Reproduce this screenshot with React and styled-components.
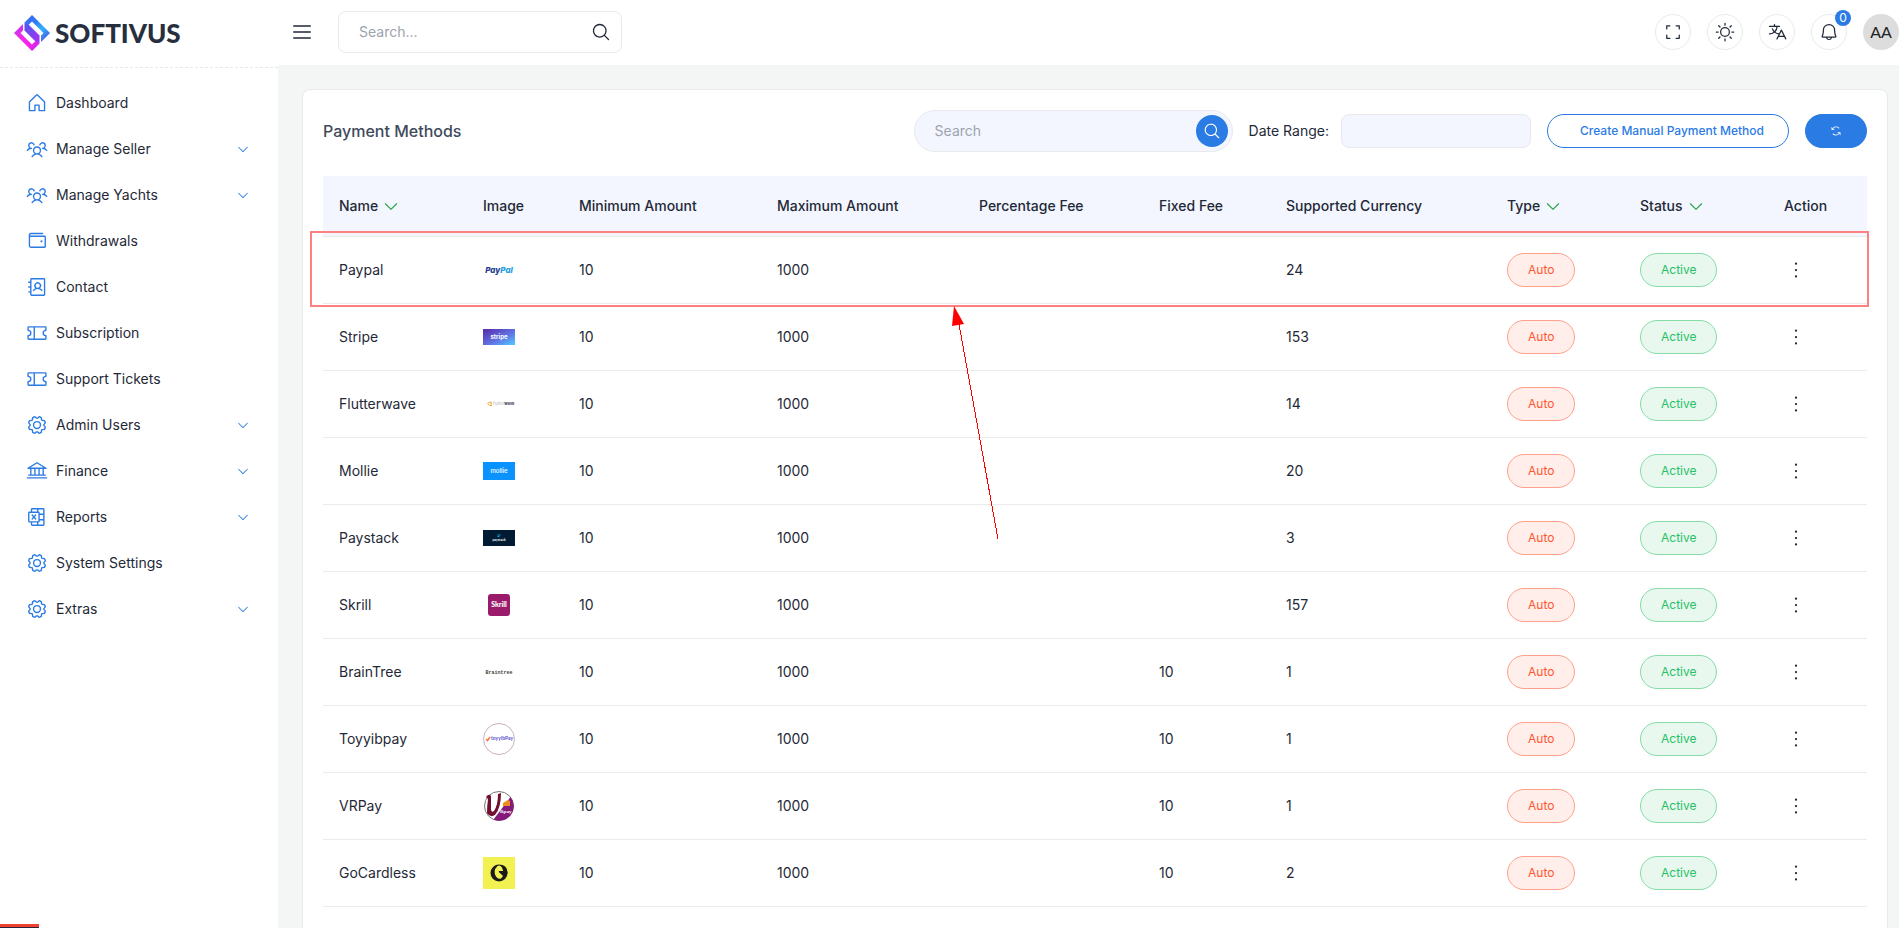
import React from "react"
import styled, { createGlobalStyle } from "styled-components"
import {
  PiHouse, PiUsersThree, PiWallet, PiAddressBook, PiTicket, PiGear, PiBank,
  PiMicrosoftExcelLogo, PiList, PiMagnifyingGlass, PiCornersOut, PiSun, PiTranslate,
  PiBell, PiArrowsCounterClockwise, PiCaretDown, PiDotsThreeVertical,
} from "react-icons/pi"

const GlobalStyle = createGlobalStyle`
  * {
    box-sizing: border-box;
  }

  body {
    margin: 0;
    background: #f4f6f6;
    color: #1f2937;
    font-family: Inter, "Liberation Sans", sans-serif;
    font-size: 14px;
    line-height: 20px;
  }

  button, input {
    font: inherit;
    color: inherit;
  }

  button {
    cursor: pointer;
  }
`

const Layout = styled.div`
  display: flex;
  height: 100vh;
  overflow: hidden;
`

const Sidebar = styled.aside`
  width: 278px;
  flex-shrink: 0;
  background: #fff;
`

const Brand = styled.a`
  display: flex;
  align-items: center;
  gap: 5px;
  height: 68px;
  padding: 0 14px 2px;
  border-bottom: 1px dashed #e5e7eb;
  color: #272f3e;
  font-family: Lato, sans-serif;
  font-size: 26px;
  font-weight: 900;
  text-decoration: none;
`

const Menu = styled.ul`
  display: flex;
  flex-direction: column;
  gap: 6px;
  margin: 0;
  padding: 15px 28px 15px 26px;
  list-style: none;
`

const MenuLink = styled.a`
  display: flex;
  align-items: center;
  gap: 8px;
  height: 40px;
  color: inherit;
  text-decoration: none;

  svg {
    color: #2b7be4;
  }

  span {
    flex: 1;
  }
`

const Page = styled.div`
  flex: 1;
  min-width: 0;
  display: flex;
  flex-direction: column;
`

const Header = styled.header`
  display: flex;
  align-items: center;
  justify-content: space-between;
  height: 65px;
  flex-shrink: 0;
  padding: 0 0 1px 12px;
  background: #fff;
`

const HeaderGroup = styled.div`
  display: flex;
  align-items: center;
  gap: ${({ $gap }) => $gap}px;
`

const PlainButton = styled.button`
  display: flex;
  padding: 0;
  border: 0;
  background: none;
`

const TopSearch = styled.form`
  display: flex;
  align-items: center;
  width: 284px;
  height: 42px;
  padding: 0 10px 0 20px;
  border: 1px solid #e8eaec;
  border-radius: 8px;
`

const SearchInput = styled.input`
  flex: 1;
  min-width: 0;
  padding: 0;
  border: 0;
  outline: 0;
  background: none;

  &::placeholder {
    color: #9ca3af;
    opacity: 1;
  }
`

const RoundButton = styled.button`
  position: relative;
  display: flex;
  align-items: center;
  justify-content: center;
  width: 36px;
  height: 36px;
  padding: 0;
  border: 1px solid #e8eaec;
  border-radius: 50%;
  background: #fff;
`

const Counter = styled.span`
  position: absolute;
  top: -5px;
  right: -5px;
  width: 16px;
  height: 16px;
  border-radius: 50%;
  background: #2b7be4;
  color: #fff;
  font-size: 12px;
  line-height: 16px;
`

const Avatar = styled.button`
  width: 36px;
  height: 36px;
  padding: 0;
  border: 0;
  border-radius: 50%;
  background: #ddd;
  color: #222;
  font-family: Lato, sans-serif;
  font-size: 16px;
`

const Main = styled.main`
  flex: 1;
  min-height: 0;
  overflow-y: auto;
  scrollbar-width: none;
  padding: 24px 11px 24px 24px;
`

const Card = styled.section`
  padding: 20px 20px 60px;
  border: 1px solid #e8ebeb;
  border-radius: 8px;
  background: #fff;
`

const Toolbar = styled.div`
  display: flex;
  align-items: center;
  gap: 16px;
  margin-bottom: 24px;
`

const Title = styled.h1`
  flex: 1;
  margin: 0;
  color: #404a5a;
  font-size: 16px;
  font-weight: 500;
`

const TableSearch = styled.form`
  display: flex;
  align-items: center;
  width: 319px;
  height: 42px;
  padding: 0 4px 0 20px;
  border: 1px solid #e8eaec;
  border-radius: 21px;
  background: #f3f6fe;
`

const SearchButton = styled.button`
  display: flex;
  align-items: center;
  justify-content: center;
  width: 32px;
  height: 32px;
  padding: 0;
  border: 0;
  border-radius: 50%;
  background: #2b7be4;
  color: #fff;
`

const DateField = styled.label`
  display: flex;
  align-items: center;
  gap: 12px;
`

const DateInput = styled.input`
  width: 190px;
  height: 34px;
  padding: 0 12px;
  border: 1px solid #e8eaec;
  border-radius: 8px;
  background: #f3f6fe;
`

const ActionButton = styled.button`
  display: flex;
  align-items: center;
  height: 34px;
  padding: ${({ $filled }) => ($filled ? "0 24px" : "0 24px 0 32px")};
  border: 1px solid #2b7be4;
  border-radius: 17px;
  background: ${({ $filled }) => ($filled ? "#2b7be4" : "#fff")};
  color: ${({ $filled }) => ($filled ? "#fff" : "#2b7be4")};
  font-size: 12px;
  font-weight: 500;
`

const TableWrapper = styled.div`
  position: relative;
`

const Table = styled.table`
  width: 100%;
  table-layout: fixed;
  border-collapse: separate;
  border-spacing: 0;
`

const HeadCell = styled.th`
  height: 61px;
  padding: 0 16px;
  border-bottom: 1px solid #e9ebed;
  background: #f3f6fe;
  font-weight: 500;
  text-align: left;
  white-space: nowrap;
`

const SortButton = styled.button`
  display: flex;
  align-items: center;
  gap: 4px;
  padding: 0;
  border: 0;
  background: none;

  svg {
    color: #28a745;
  }
`

const Cell = styled.td`
  height: 67px;
  padding: 0 16px;
  border-bottom: 1px solid #e9ebed;

  > svg {
    display: block;
  }
`

const Pill = styled.span`
  display: inline-block;
  padding: 0 20px;
  border: 1px solid ${({ $tone }) => ($tone === "green" ? "#85dca6" : "#ffa08c")};
  border-radius: 17px;
  background: ${({ $tone }) => ($tone === "green" ? "#e8f8ef" : "#ffeeea")};
  color: ${({ $tone }) => ($tone === "green" ? "#27c165" : "#ff5630")};
  font-size: 12px;
  line-height: 32px;
`

// Marks the first row of the table
const Highlight = styled.div`
  position: absolute;
  top: 55px;
  left: -13px;
  right: -2px;
  height: 76px;
  border: 2px solid #ff8080;
  pointer-events: none;
`

const Pointer = styled.svg`
  position: absolute;
  top: 130px;
  left: 618px;
  pointer-events: none;
`

const DebugToggle = styled.div`
  position: fixed;
  bottom: 0;
  left: 0;
  width: 39px;
  height: 4px;
  border-top: 3px solid #ef4130;
  background: #2b2438;
`

const menu = [
  { label: "Dashboard", Icon: PiHouse },
  { label: "Manage Seller", Icon: PiUsersThree, nested: true },
  { label: "Manage Yachts", Icon: PiUsersThree, nested: true },
  { label: "Withdrawals", Icon: PiWallet },
  { label: "Contact", Icon: PiAddressBook },
  { label: "Subscription", Icon: PiTicket },
  { label: "Support Tickets", Icon: PiTicket },
  { label: "Admin Users", Icon: PiGear, nested: true },
  { label: "Finance", Icon: PiBank, nested: true },
  { label: "Reports", Icon: PiMicrosoftExcelLogo, nested: true },
  { label: "System Settings", Icon: PiGear },
  { label: "Extras", Icon: PiGear, nested: true },
]

const columns = [
  { label: "Name", width: 144, sortable: true },
  { label: "Image", width: 96 },
  { label: "Minimum Amount", width: 198 },
  { label: "Maximum Amount", width: 202 },
  { label: "Percentage Fee", width: 180 },
  { label: "Fixed Fee", width: 127 },
  { label: "Supported Currency", width: 221 },
  { label: "Type", width: 133, sortable: true },
  { label: "Status", width: 144, sortable: true },
  { label: "Action", width: 99 },
]

const methods = [
  { name: "Paypal", fixed: "", currencies: 24 },
  { name: "Stripe", fixed: "", currencies: 153 },
  { name: "Flutterwave", fixed: "", currencies: 14 },
  { name: "Mollie", fixed: "", currencies: 20 },
  { name: "Paystack", fixed: "", currencies: 3 },
  { name: "Skrill", fixed: "", currencies: 157 },
  { name: "BrainTree", fixed: 10, currencies: 1 },
  { name: "Toyyibpay", fixed: 10, currencies: 1 },
  { name: "VRPay", fixed: 10, currencies: 1 },
  { name: "GoCardless", fixed: 10, currencies: 2 },
]

const logos = {
  Paypal: (
    <text x="16" y="19" textAnchor="middle" fontSize="8" fontWeight="800" fontStyle="italic" fill="#1f3d8c">
      Pay<tspan fill="#1b9de0">Pal</tspan>
    </text>
  ),
  Stripe: (
    <>
      <defs>
        <linearGradient id="stripe" x1="0" y1="0" x2="1" y2="1">
          <stop offset="0.1" stopColor="#5a35b0" />
          <stop offset="0.6" stopColor="#5f78e6" />
          <stop offset="0.95" stopColor="#4fc4fb" />
        </linearGradient>
      </defs>
      <rect y="8" width="32" height="16" fill="url(#stripe)" />
      <text x="16" y="18" textAnchor="middle" fontSize="6" fontWeight="700" fill="#fff">stripe</text>
    </>
  ),
  Flutterwave: (
    <>
      <path d="M9 14.5c-3-1-5 .5-4 1.7s2.5 1.5 4 1.3M9 15c-2 0-2 1.5 0 2" fill="none" stroke="#f5a93c" />
      <text x="10" y="17" fontSize="4" fill="#b4b4be">flutter<tspan fontWeight="700" fill="#3a3850">wave</tspan></text>
    </>
  ),
  Mollie: (
    <>
      <rect y="7" width="32" height="18" fill="#0a93ff" />
      <text x="16" y="18" textAnchor="middle" fontSize="6" fontWeight="500" fill="#fff">mollie</text>
    </>
  ),
  Paystack: (
    <>
      <rect y="8" width="32" height="16" fill="#011b33" />
      <path d="M14.5 13h3M14.5 14.5h2" stroke="#09a5db" />
      <text x="16" y="19" textAnchor="middle" fontSize="3" fontWeight="600" fill="#fff">paystack</text>
    </>
  ),
  Skrill: (
    <>
      <rect x="5" y="5" width="22" height="22" rx="3" fill="#9b1b6b" />
      <text x="16" y="18" textAnchor="middle" fontSize="7" fontWeight="900" fontFamily="Lato" fill="#fff">Skrill</text>
    </>
  ),
  BrainTree: (
    <text x="16" y="18" textAnchor="middle" fontSize="5" fontWeight="700" fontFamily="Liberation Mono" fill="#444">
      Braintree
    </text>
  ),
  Toyyibpay: (
    <>
      <circle cx="16" cy="16" r="15.5" fill="#fff" stroke="#cbb0c0" />
      <path d="M3 16l1.5 1.5L7 14" fill="none" stroke="#f47b3c" strokeWidth="1.5" />
      <text x="8" y="17" fontSize="5" fontWeight="700" fontFamily="Lato" fill="#5a4fcf">toyyibPay</text>
    </>
  ),
  VRPay: (
    <>
      <circle cx="16" cy="16" r="14.5" fill="#fff" stroke="#777" />
      <path d="M27.5 7A14.5 14.5 0 0 1 10.500 29.500Z" fill="#861a7c" />
      <path d="M3 7Q6 3 8 6V20Q9 23 11 21Q15 15 15 4L18 3Q18 18 12 25Q7 28 4 23Q4 16 5 9Z" fill="#70102e" />
      <path d="M20 13l5-3 2 1v5h-7z" fill="#f08a1c" />
      <text x="17" y="23" fontSize="5" fontWeight="700" fontFamily="Liberation Serif" fill="#fff">Rpay</text>
    </>
  ),
  GoCardless: (
    <>
      <rect width="32" height="32" fill="#f1f252" />
      <circle cx="16" cy="16" r="8.5" fill="#1c1b18" />
      <path d="M14.500 9Q9.500 14 13 19.500Q15 22.500 18 21.500L20.500 18.500 16 15V14H20Q20 9.500 16.500 8.500Z" fill="#f1f252" />
      <path d="M17 8Q23 8 24 13H20Q20 10 17 8ZM15.500 14.500H24.500V16Q23 21 20 19Z" fill="#1c1b18" />
    </>
  ),
}

const BrandMark = () => (
  <svg width="36" height="36" viewBox="0 0 36 36">
    <defs>
      <linearGradient id="markTop" x1="0" y1="0" x2="1" y2="1">
        <stop offset="0" stopColor="#3f63ee" />
        <stop offset="0.35" stopColor="#2f7bf8" />
        <stop offset="0.6" stopColor="#2fb4fb" />
        <stop offset="1" stopColor="#4b3be0" />
      </linearGradient>
      <linearGradient id="markBand" x1="0" y1="0" x2="1" y2="1">
        <stop offset="0" stopColor="#4a5cf0" />
        <stop offset="0.5" stopColor="#7a45ee" />
        <stop offset="1" stopColor="#b02df5" />
      </linearGradient>
      <linearGradient id="markBottom" x1="0" y1="0" x2="1" y2="1">
        <stop offset="0" stopColor="#a63df5" />
        <stop offset="0.35" stopColor="#f02be8" />
        <stop offset="0.7" stopColor="#fb1fe8" />
        <stop offset="1" stopColor="#a92df5" />
      </linearGradient>
    </defs>
    <path d="M10.5 7.5L18 0 36 18 27 27V20.5L29.5 18 18 6.5 14 10.5Z" fill="url(#markTop)" />
    <path d="M25.5 28.5L18 36 0 18 9 9V15.5L6.5 18 18 29.5 22 25.5Z" fill="url(#markBottom)" />
    <path d="M10.5 7.5L15.5 10.5 25.5 20.5V28.5L20.5 25.5 10.5 15.5Z" fill="url(#markBand)" />
  </svg>
)

const App = () => (
  <>
    <GlobalStyle />
    <Layout>
      <Sidebar>
        <Brand href="#">
          <BrandMark />
          SOFTIVUS
        </Brand>
        <nav>
          <Menu>
            {menu.map(({ label, Icon, nested }) => (
              <li key={label}>
                <MenuLink href="#">
                  <Icon size={22} />
                  <span>{label}</span>
                  {nested && <PiCaretDown size={14} />}
                </MenuLink>
              </li>
            ))}
          </Menu>
        </nav>
      </Sidebar>
      <Page>
        <Header>
          <HeaderGroup $gap={24}>
            <PlainButton aria-label="Toggle menu">
              <PiList size={24} />
            </PlainButton>
            <TopSearch>
              <SearchInput aria-label="Search the site" placeholder="Search..." />
              <PlainButton type="button" aria-label="Search">
                <PiMagnifyingGlass size={20} />
              </PlainButton>
            </TopSearch>
          </HeaderGroup>
          <HeaderGroup $gap={16}>
            <RoundButton aria-label="Full screen"><PiCornersOut size={20} /></RoundButton>
            <RoundButton aria-label="Theme"><PiSun size={20} /></RoundButton>
            <RoundButton aria-label="Language"><PiTranslate size={20} /></RoundButton>
            <RoundButton aria-label="Notifications">
              <PiBell size={20} />
              <Counter>0</Counter>
            </RoundButton>
            <Avatar>AA</Avatar>
          </HeaderGroup>
        </Header>
        <Main>
          <Card>
            <Toolbar>
              <Title>Payment Methods</Title>
              <TableSearch>
                <SearchInput aria-label="Search payment methods" placeholder="Search" />
                <SearchButton type="button" aria-label="Search"><PiMagnifyingGlass size={18} /></SearchButton>
              </TableSearch>
              <DateField>
                Date Range:
                <DateInput type="text" />
              </DateField>
              <ActionButton>Create Manual Payment Method</ActionButton>
              <ActionButton $filled aria-label="Refresh"><PiArrowsCounterClockwise size={12} /></ActionButton>
            </Toolbar>
            <TableWrapper>
              <Table>
                <colgroup>
                  {columns.map(({ label, width }) => <col key={label} width={width} />)}
                </colgroup>
                <thead>
                  <tr>
                    {columns.map(({ label, sortable }) => (
                      <HeadCell key={label}>
                        {sortable ? <SortButton>{label} <PiCaretDown size={18} /></SortButton> : label}
                      </HeadCell>
                    ))}
                  </tr>
                </thead>
                <tbody>
                  {methods.map(({ name, fixed, currencies }) => (
                    <tr key={name}>
                      <Cell>{name}</Cell>
                      <Cell><svg width="32" height="32">{logos[name]}</svg></Cell>
                      <Cell>10</Cell>
                      <Cell>1000</Cell>
                      <Cell />
                      <Cell>{fixed}</Cell>
                      <Cell>{currencies}</Cell>
                      <Cell><Pill>Auto</Pill></Cell>
                      <Cell><Pill $tone="green">Active</Pill></Cell>
                      <Cell>
                        <PlainButton aria-label={`Actions for ${name}`}><PiDotsThreeVertical size={24} /></PlainButton>
                      </Cell>
                    </tr>
                  ))}
                </tbody>
              </Table>
              <Highlight />
              <Pointer width="60" height="240">
                <path d="M18 18L57 233" stroke="#f00" fill="none" shapeRendering="crispEdges" />
                <path d="M13 0L23 18 11 20Z" fill="#f00" />
              </Pointer>
            </TableWrapper>
          </Card>
        </Main>
      </Page>
    </Layout>
    <DebugToggle />
  </>
)

export default App
